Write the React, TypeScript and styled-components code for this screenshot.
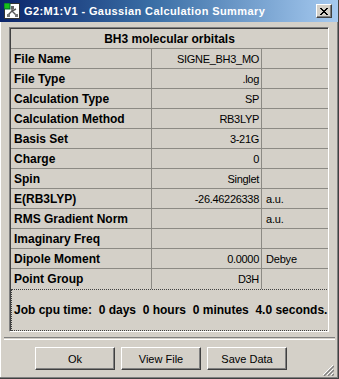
import styled, { createGlobalStyle } from "styled-components";

const Global = createGlobalStyle`
  html, body {
    margin: 0;
    padding: 0;
    background: #d4d0c8;
  }
`;

const rows: { label: string; value: string; unit?: string }[] = [
  { label: "File Name", value: "SIGNE_BH3_MO" },
  { label: "File Type", value: ".log" },
  { label: "Calculation Type", value: "SP" },
  { label: "Calculation Method", value: "RB3LYP" },
  { label: "Basis Set", value: "3-21G" },
  { label: "Charge", value: "0" },
  { label: "Spin", value: "Singlet" },
  { label: "E(RB3LYP)", value: "-26.46226338", unit: "a.u." },
  { label: "RMS Gradient Norm", value: "", unit: "a.u." },
  { label: "Imaginary Freq", value: "" },
  { label: "Dipole Moment", value: "0.0000", unit: "Debye" },
  { label: "Point Group", value: "D3H" },
];

const AppIcon = () => (
  <svg width="16" height="16" viewBox="0 0 16 16">
    <rect x="0.5" y="0.5" width="15" height="15" fill="#fff" stroke="#333" />
    <rect x="0" y="0" width="6" height="6" fill="#18c018" stroke="#063" strokeWidth="1" />
    <path d="M8 4 L8 8 M8 8 L4 12 M8 8 L12 12 M8 8 L12 6" stroke="#555" strokeWidth="1.4" fill="none" />
    <rect x="7" y="3" width="3" height="3" fill="#666" />
    <rect x="3" y="11" width="3" height="3" fill="#777" />
    <rect x="11" y="11" width="3" height="3" fill="#777" />
  </svg>
);

const App: React.FC = () => {
  return (
    <Window>
      <Global />
      <TitleBar>
        <AppIcon />
        <TitleText>G2:M1:V1 - Gaussian Calculation Summary</TitleText>
        <CloseButton>
          <svg width="8" height="7" viewBox="0 0 8 7">
            <path d="M0 0 L7 7 M1 0 L8 7 M7 0 L0 7 M8 0 L1 7" stroke="#000" strokeWidth="1" />
          </svg>
        </CloseButton>
      </TitleBar>

      <Body>
        <Panel>
          <Header>BH3 molecular orbitals</Header>
          <Grid>
            {rows.map((r) => (
              <Row key={r.label}>
                <Label>{r.label}</Label>
                <Value>{r.value}</Value>
                <Unit>{r.unit ?? ""}</Unit>
              </Row>
            ))}
          </Grid>
          <JobBox>{"Job cpu time:  0 days  0 hours  0 minutes  4.0 seconds."}</JobBox>
        </Panel>

        <Separator />

        <ButtonRow>
          <Button>Ok</Button>
          <Button>View File</Button>
          <Button>Save Data</Button>
        </ButtonRow>
        <Grip>
          <svg width="12" height="12" viewBox="0 0 12 12">
            <path d="M11 1 L1 11 M11 5 L5 11 M11 9 L9 11" stroke="#fff" strokeWidth="1" />
            <path d="M12 2 L2 12 M12 6 L6 12 M12 10 L10 12" stroke="#808080" strokeWidth="1.4" />
          </svg>
        </Grip>
      </Body>
    </Window>
  );
};

export default App;

const Window = styled.div`
  position: relative;
  width: 339px;
  height: 379px;
  box-sizing: border-box;
  background: #d4d0c8;
  display: flex;
  flex-direction: column;
  font-family: "Liberation Sans", Arial, sans-serif;
  color: #000;
  border-right: 1px solid #404040;
  border-bottom: 1px solid #404040;
  box-shadow: inset -1px -1px #808080, inset 1px 0 #fff;
  overflow: hidden;
`;

const TitleBar = styled.div`
  height: 22px;
  flex: none;
  display: flex;
  align-items: center;
  padding: 0 6px 0 4px;
  background: linear-gradient(to right, #0a246a 0%, #3a6ea5 45%, #a6caf0 100%);
  gap: 4px;
`;

const TitleText = styled.div`
  flex: 1;
  color: #fff;
  font-weight: bold;
  font-size: 11px;
  letter-spacing: 0.4px;
  white-space: nowrap;
`;

const CloseButton = styled.div`
  width: 16px;
  height: 14px;
  box-sizing: border-box;
  background: #d4d0c8;
  border: 1px solid;
  border-color: #fff #404040 #404040 #fff;
  box-shadow: inset -1px -1px #808080;
  display: flex;
  align-items: center;
  justify-content: center;
`;

const Body = styled.div`
  flex: 1;
  display: flex;
  flex-direction: column;
  padding: 5px 8px 0 9px;
`;

const Panel = styled.div`
  width: 320px;
  height: 305px;
  box-sizing: border-box;
  border: 1px solid;
  border-color: #808080 #fff #fff #808080;
  box-shadow: inset 1px 1px #404040;
  padding: 1px 0 0 1px;
  display: flex;
  flex-direction: column;
`;

const Header = styled.div`
  height: 20px;
  box-sizing: border-box;
  border-bottom: 1px solid #8c8a84;
  display: flex;
  align-items: center;
  justify-content: center;
  font-weight: bold;
  font-size: 12px;
`;

const Grid = styled.div`
  display: flex;
  flex-direction: column;
`;

const Row = styled.div`
  display: grid;
  grid-template-columns: 141px 110px 1fr;
  height: 20px;
  box-sizing: border-box;
  border-bottom: 1px solid #8c8a84;
  &:last-child {
    border-bottom: none;
  }
`;

const Label = styled.div`
  display: flex;
  align-items: center;
  padding-left: 3px;
  font-weight: bold;
  font-size: 12px;
  border-right: 1px solid #8c8a84;
  white-space: nowrap;
`;

const Value = styled.div`
  display: flex;
  align-items: center;
  justify-content: flex-end;
  padding-right: 2px;
  font-size: 11px;
  letter-spacing: -0.3px;
  border-right: 1px solid #8c8a84;
  white-space: nowrap;
`;

const Unit = styled.div`
  display: flex;
  align-items: center;
  padding-left: 4px;
  font-size: 11px;
  letter-spacing: -0.2px;
`;

const JobBox = styled.div`
  flex: 1;
  margin-right: 1px;
  border: 1px dotted #404040;
  border-right: none;
  display: flex;
  align-items: center;
  padding-left: 2px;
  font-weight: bold;
  font-size: 12px;
  white-space: pre;
`;

const Separator = styled.div`
  margin: 5px -5px 0 -5px;
  height: 1px;
  border-top: 1px solid #808080;
  border-bottom: 1px solid #fff;
`;

const ButtonRow = styled.div`
  display: flex;
  gap: 6px;
  padding-left: 26px;
  margin-top: 7px;
`;

const Button = styled.div`
  width: 80px;
  height: 23px;
  box-sizing: border-box;
  border: 1px solid;
  border-color: #fff #404040 #404040 #fff;
  box-shadow: inset -1px -1px #808080;
  display: flex;
  align-items: center;
  justify-content: center;
  font-size: 11px;
`;

const Grip = styled.div`
  position: absolute;
  right: 4px;
  bottom: 4px;
  width: 12px;
  height: 12px;
`;
